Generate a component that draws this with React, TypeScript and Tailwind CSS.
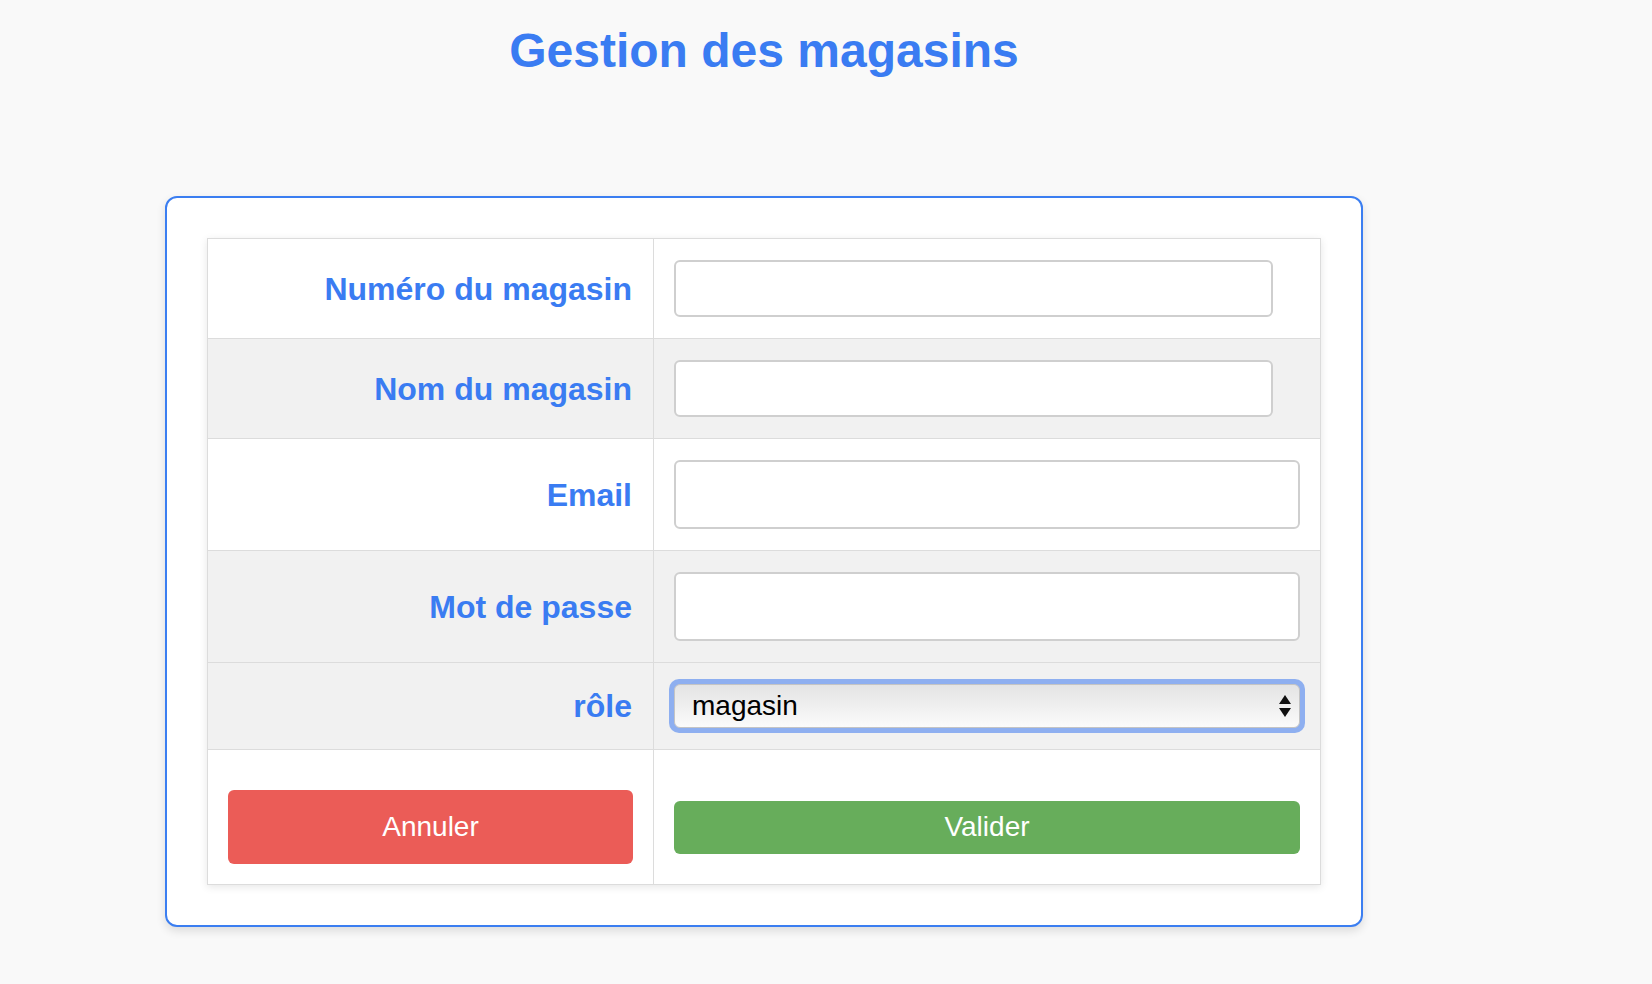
import { FC } from 'react';

const font = { fontFamily: '"Liberation Sans", Arial, sans-serif' };

type Row = {
  label: string;
  bg: string;
  field: 'short' | 'long' | 'select';
  type?: string;
};

const rows: Row[] = [
  { label: 'Numéro du magasin', bg: 'bg-white', field: 'short' },
  { label: 'Nom du magasin', bg: 'bg-[#f1f1f1]', field: 'short' },
  { label: 'Email', bg: 'bg-white', field: 'long', type: 'email' },
  { label: 'Mot de passe', bg: 'bg-[#f1f1f1]', field: 'long', type: 'password' },
  { label: 'rôle', bg: 'bg-[#f1f1f1]', field: 'select' },
];

const SelectArrows = () => (
  <svg width="14" height="26" viewBox="0 0 14 26" className="absolute right-[13px] top-1/2 -translate-y-1/2 pointer-events-none">
    <path d="M7 2 L13 11 L1 11 Z" fill="#111" />
    <path d="M1 15 L13 15 L7 24 Z" fill="#111" />
  </svg>
);

const RoleSelect = () => (
  <div className="relative rounded-[10px] p-[5px] bg-[#8eaff0] -m-[5px]">
    <select
      defaultValue="magasin"
      className="block w-full h-[44px] appearance-none rounded-[6px] border border-[#c4c4c4] bg-gradient-to-b from-[#e4e4e4] via-[#efefef] to-[#fbfbfb] pl-[17px] pr-10 text-[28px] text-black outline-none"
      style={font}
    >
      <option value="magasin">magasin</option>
      <option value="admin">admin</option>
    </select>
    <SelectArrows />
  </div>
);

const Field: FC<{ row: Row }> = ({ row }) => {
  if (row.field === 'select') return <RoleSelect />;
  if (row.field === 'short')
    return (
      <input
        type="text"
        className="block w-[599px] h-[57px] rounded-[6px] border-2 border-[#cfcfcf] bg-white px-3 text-[24px] outline-none"
      />
    );
  return (
    <input
      type={row.type}
      className="block w-full h-[69px] rounded-[6px] border-2 border-[#cfcfcf] bg-white px-3 text-[24px] outline-none"
    />
  );
};

const App: FC = () => {
  return (
    <div className="min-h-screen bg-[#f9f9f9] pb-10" style={font}>
      <div className="ml-[165px] w-[1198px]">
        <h1 className="pt-[23px] text-center text-[48px] leading-[55px] font-bold text-[#3a7cf2]">
          Gestion des magasins
        </h1>

        <div className="mt-[118px] rounded-[12px] border-2 border-[#3b7ef1] bg-white p-10 shadow-[0_4px_10px_rgba(0,0,0,0.12)]">
          <table className="w-full table-fixed border-collapse border border-[#dcdcdc] shadow-[0_2px_8px_rgba(0,0,0,0.10)]">
            <colgroup>
              <col className="w-[446px]" />
              <col />
            </colgroup>
            <tbody>
              {rows.map((row) => {
                const py = row.field === 'select' ? 'py-[19px]' : 'py-[21px]';
                return (
                  <tr key={row.label} className={row.bg}>
                    <td className={`border border-[#dcdcdc] pl-5 pr-[21px] ${py} text-right align-middle text-[32px] font-bold text-[#3a7cf2]`}>
                      {row.label}
                    </td>
                    <td className={`border border-[#dcdcdc] px-5 ${py} align-middle`}>
                      <Field row={row} />
                    </td>
                  </tr>
                );
              })}
              <tr className="bg-white">
                <td className="border border-[#dcdcdc] px-5 py-5 align-middle">
                  <button
                    type="button"
                    className="mt-5 block w-full h-[74px] rounded-[6px] bg-[#eb5c57] text-[28px] text-white"
                  >
                    Annuler
                  </button>
                </td>
                <td className="border border-[#dcdcdc] px-5 py-5 align-middle">
                  <button
                    type="button"
                    className="mt-5 block w-full h-[53px] rounded-[6px] bg-[#67ad5b] text-[28px] text-white"
                  >
                    Valider
                  </button>
                </td>
              </tr>
            </tbody>
          </table>
        </div>
      </div>
    </div>
  );
};

export default App;
